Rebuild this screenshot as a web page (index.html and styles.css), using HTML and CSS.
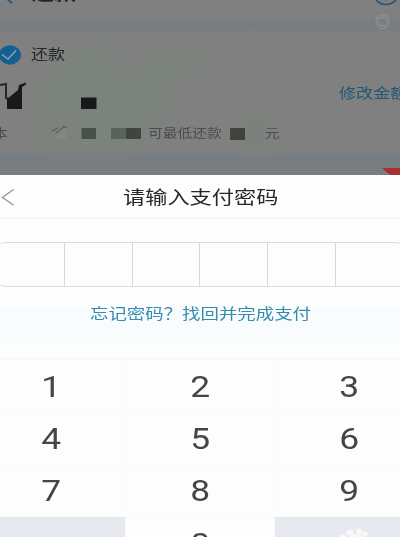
FILE: index.html
```
<!DOCTYPE html>
<html lang="zh-CN">
<head>
<meta charset="utf-8">
<title>还款</title>
<link rel="stylesheet" href="styles.css">
</head>
<body>
<div class="screen">
  <section class="page">
    <svg class="smudge" viewBox="0 0 400 175" aria-hidden="true">
      <defs><filter id="soft" x="-20%" y="-20%" width="140%" height="140%"><feGaussianBlur stdDeviation="5"/></filter></defs>
      <path d="M66 45L107 40L119 62L145 60L180 44L206 45L203 72L178 84L170 120L154 133L137 151L40 151L28 130L30 95L45 76Z" fill="#7c827c" filter="url(#soft)"/>
      <path d="M240 107L270 108L278 152L243 155Z" fill="#7d817d" filter="url(#soft)"/>
    </svg>
    <header class="nav">
      <svg class="nav-back" viewBox="0 0 14 18"><path d="M12 1L3 9.500L12 17" /></svg>
      <h1 class="nav-title"><span class="wide">还款</span></h1>
      <svg class="nav-help" viewBox="0 0 28 24"><ellipse cx="14" cy="12" rx="12" ry="10.500"/><path d="M14 10v4M14 17v1.500"/></svg>
    </header>
    <div class="card">
      <div class="choice">
        <svg class="check" viewBox="0 0 24 20"><ellipse cx="10" cy="10" rx="11" ry="9.700"/><path d="M2 9.500L8 14L16 5.500"/></svg>
        <span class="wide">还款</span>
      </div>
      <div class="amount">
        <svg class="amount-mark" viewBox="0 0 100 30" aria-hidden="true">
          <path d="M0 5L6 4V18L8 19" class="stroke"/>
          <path d="M7 19L18 10L19 5L26 2.500V4.500L22 7V29H7Z" class="ink"/>
          <path d="M81 17.500H96.500V29H81Z" class="ink"/>
        </svg>
        <a class="edit"><span class="wide">修改金额</span></a>
      </div>
      <div class="detail">
        <span class="detail-start wide">本</span>
        <svg class="mosaic" viewBox="0 0 100 20" aria-hidden="true">
          <path d="M10 15L23 5V16H10Z" fill="#858685"/>
          <path d="M9 8L15 5M13 10L22 3M20 3L24 5" stroke="#515551" fill="none"/>
          <path d="M38.500 5H53V16H38.500Z" fill="#465249"/>
          <path d="M68 5H83V16H68Z" fill="#5b625b"/>
          <path d="M83 5H98V16H83Z" fill="#3f463f"/>
        </svg>
        <span class="detail-text wide">可最低还款</span>
        <i class="block"></i>
        <span class="detail-unit wide">元</span>
      </div>
    </div>
    <span class="float-ring wide">◎</span>
    <svg class="ribbon" viewBox="0 0 18 7"><path d="M0 0H18V7H8Z"/></svg>
  </section>

  <section class="sheet">
    <div class="sheet-head">
      <svg class="sheet-back" viewBox="0 0 14 18"><path d="M12.500 1.500L1.500 9.500L12.500 17"/></svg>
      <h2 class="sheet-title"><span class="wide">请输入支付密码</span></h2>
    </div>
    <div class="code">
      <i></i><i></i><i></i><i></i><i></i><i></i>
    </div>
    <div class="forgot"><a class="wide">忘记密码？找回并完成支付</a></div>
    <div class="keypad">
      <b><span>1</span></b><b><span>2</span></b><b><span>3</span></b>
      <b><span>4</span></b><b><span>5</span></b><b><span>6</span></b>
      <b><span>7</span></b><b><span>8</span></b><b><span>9</span></b>
      <b class="blank"></b><b><span>0</span></b>
      <b class="blank">
        <svg class="paw" viewBox="0 0 36 11"><ellipse cx="4" cy="9" rx="3" ry="2.500"/><ellipse cx="11" cy="4.500" rx="3.500" ry="3"/><ellipse cx="20" cy="3.500" rx="3" ry="3"/><ellipse cx="26" cy="6" rx="3" ry="2.500"/><ellipse cx="17" cy="10" rx="7" ry="4"/></svg>
      </b>
    </div>
  </section>
</div>
</body>
</html>
```
FILE: styles.css
```
* { box-sizing: border-box; }
html, body { margin: 0; }
body {
  width: 400px;
  height: 537px;
  overflow: hidden;
  font-family: "Noto Sans CJK SC", sans-serif;
}
h1, h2 { margin: 0; font-weight: 400; }
svg { display: block; flex: none; }
.screen { width: 400px; height: 537px; overflow: hidden; }
.wide {
  display: inline-block;
  white-space: nowrap;
  transform: scaleX(1.22);
  transform-origin: left center;
}

.page {
  position: relative;
  height: 174.5px;
  overflow: hidden;
  background: linear-gradient(#808080 0 17px, #787d81 20px 29px, #808080 33px 151px, #787d82 156px 171px, #7b7e81 174px);
}
.smudge { position: absolute; left: 0; top: 0; width: 400px; height: 175px; }
.nav { display: flex; height: 19px; position: relative; }
.nav-back { width: 14px; height: 18px; margin-top: -14px; }
.nav-back path { fill: none; stroke: #1d5f87; stroke-width: 2; }
.nav-title {
  margin: -17px 0 0 18px;
  width: 60px;
  font-size: 18px;
  line-height: 19px;
  font-weight: 500;
  color: #202223;
}
.nav-help { width: 28px; height: 24px; margin: -18px 0 0 284px; }
.nav-help ellipse, .nav-help path { fill: none; stroke: #20597c; stroke-width: 1.6; }
.card { position: relative; height: 123px; padding-top: 26px; }
.choice { display: flex; height: 20px; font-size: 14px; line-height: 16px; color: #242725; }
.check { width: 24px; height: 20px; margin-right: 7px; }
.check ellipse { fill: #15608f; }
.check path { fill: none; stroke: #8aa5b5; stroke-width: 1.4; }
.amount { display: flex; height: 30px; margin-top: 15px; }
.amount-mark { width: 100px; height: 30px; }
.ink { fill: #171a18; }
.stroke { fill: none; stroke: #242824; stroke-width: 2; }
.edit { margin: 2px 0 0 239px; font-size: 14px; line-height: 20px; color: #205779; }
.detail { display: flex; height: 20px; margin-top: 14px; font-size: 12.1px; line-height: 17px; color: #4a4d4b; }
.detail-start { width: 13px; margin-left: -7px; }
.mosaic { width: 100px; height: 20px; margin: -1px 0 0 37px; }
.detail-text { width: 63px; margin-left: 5px; }
.block { width: 15px; height: 12px; margin: 4px 0 0 19px; background: #3f453d; }
.detail-unit { margin-left: 20px; }
.float-ring { position: absolute; left: 375px; top: 11px; font-size: 15px; line-height: 20px; color: #a0a0a0; transform: none; }
.ribbon { position: absolute; right: 0; bottom: 0; width: 18px; height: 7px; fill: #a8302e; }

.sheet { height: 362.5px; background: #fdfdfd; }
.sheet-head { display: flex; height: 44.5px; border-bottom: 1px solid #f2f2f2; }
.sheet-back { width: 14px; height: 18px; margin: 13px 0 0 1px; }
.sheet-back path { fill: none; stroke: #999; stroke-width: 1.4; }
.sheet-title { margin: 8px 0 0 108px; font-size: 18.2px; line-height: 26px; color: #272727; }
.code {
  display: grid;
  grid-template-columns: 65px 68px 67px 68px 68px 68px;
  width: 404px;
  height: 45px;
  margin: 23px 0 0 -1px;
  border: 1px solid #dcdcdc;
  border-left-color: transparent;
  border-radius: 6px;
}
.code i { border-right: 1px solid #d9d9d9; }
.forgot {
  height: 72px;
  padding: 13px 0 0 90px;
  font-size: 15.1px;
  line-height: 24px;
  color: #368bad;
  background: linear-gradient(#fdfdfd 17px, #f8fcfe 23px 54px, #fdfdfd 60px);
}
.keypad {
  display: grid;
  grid-template-columns: 125.5px 149px 149px;
  grid-template-rows: 53px 51.5px 52px 52px;
  width: 424px;
  border-top: 1px solid #f8f8f8;
}
.keypad b {
  border-right: 1px solid #f8f8f8;
  border-bottom: 1px solid #f9f9f9;
  font: 400 29px/54px Roboto, sans-serif;
  color: #454545;
  text-align: center;
  padding-left: 1px;
}
.keypad b:nth-child(3n + 1) { padding-right: 23px; }
.keypad b:nth-child(n + 4) { line-height: 53px; }
.keypad b:nth-child(n + 10) { line-height: 55px; }
.keypad span { display: inline-block; transform: scaleX(1.22); }
.keypad .blank { background: #e6e9ed; }
.paw { width: 36px; height: 11px; margin: 11px 0 0 63px; fill: #f8f9fa; }
```
